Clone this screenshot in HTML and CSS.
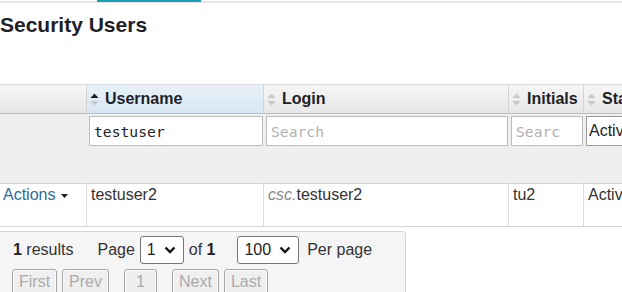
FILE: index.html
```html
<!DOCTYPE html>
<html lang="en">
<head>
<meta charset="utf-8">
<title>Security Users</title>
<link rel="stylesheet" href="styles.css">
</head>
<body>
<div class="topnav"><span class="tab-indicator"></span></div>
<h1 class="page-title">Security Users</h1>

<div class="grid">
  <div class="hcell"></div>
  <div class="hcell sorted">
    <svg class="sort-icon" viewBox="0 0 9 13"><path d="M0.5 5L4.5 0.5L8.5 5Z" fill="#1e1e1e"/><path d="M0.5 8L4.5 12.5L8.5 8Z" fill="#c4c7ca"/></svg>Username
  </div>
  <div class="hcell">
    <svg class="sort-icon" viewBox="0 0 9 13"><path d="M0.5 5L4.5 0.5L8.5 5Z" fill="#c8c8c8"/><path d="M0.5 8L4.5 12.5L8.5 8Z" fill="#c8c8c8"/></svg>Login
  </div>
  <div class="hcell">
    <svg class="sort-icon" viewBox="0 0 9 13"><path d="M0.5 5L4.5 0.5L8.5 5Z" fill="#c8c8c8"/><path d="M0.5 8L4.5 12.5L8.5 8Z" fill="#c8c8c8"/></svg>Initials
  </div>
  <div class="hcell">
    <svg class="sort-icon" viewBox="0 0 9 13"><path d="M0.5 5L4.5 0.5L8.5 5Z" fill="#c8c8c8"/><path d="M0.5 8L4.5 12.5L8.5 8Z" fill="#c8c8c8"/></svg>Status
  </div>

  <div class="fcell"></div>
  <div class="fcell"><input class="filter" type="text" value="testuser"></div>
  <div class="fcell"><input class="filter" type="text" placeholder="Search"></div>
  <div class="fcell"><input class="filter narrow" type="text" placeholder="Search"></div>
  <div class="fcell"><div class="status-select">Active</div></div>

  <div class="dcell actions">Actions<svg class="caret" width="7" height="4" viewBox="0 0 7 4"><path d="M0 0H7L3.5 4Z" fill="#1e1e1e"/></svg></div>
  <div class="dcell">testuser2</div>
  <div class="dcell"><span class="prefix">csc.</span>testuser2</div>
  <div class="dcell">tu2</div>
  <div class="dcell">Active</div>
</div>

<div class="pager">
  <div class="pager-info">
    <span class="count"><b>1</b> results</span>
    <span class="label">Page</span>
    <span class="select"><span>1</span><svg class="chev" width="12" height="8" viewBox="0 0 12 8"><path d="M1.5 1.5L6 6L10.5 1.5" fill="none" stroke="#111" stroke-width="2.4"/></svg></span>
    <span class="of">of <b>1</b></span>
    <span class="select"><span>100</span><svg class="chev" width="12" height="8" viewBox="0 0 12 8"><path d="M1.5 1.5L6 6L10.5 1.5" fill="none" stroke="#111" stroke-width="2.4"/></svg></span>
    <span class="per">Per page</span>
  </div>
  <div class="pager-buttons">
    <div class="btn-group">
      <span class="pbtn">First</span>
      <span class="pbtn">Prev</span>
    </div>
    <span class="pbtn num">1</span>
    <div class="btn-group">
      <span class="pbtn">Next</span>
      <span class="pbtn">Last</span>
    </div>
  </div>
</div>
</body>
</html>
```

FILE: styles.css
```css
* { box-sizing: border-box; }
html, body { margin: 0; padding: 0; overflow: hidden; background: #fff; }
body {
  font-family: "Liberation Sans", Arial, sans-serif;
  font-size: 16px;
  color: #333;
  width: 622px;
  height: 292px;
}

.topnav { display: flex; height: 3px; border-bottom: 2px solid #e6e6e6; }
.tab-indicator { flex: none; margin-left: 97px; width: 104px; height: 2px; background: #1a9db3; }

.page-title {
  margin: 10px 0 47px;
  font-size: 21px;
  line-height: 24px;
  font-weight: bold;
  color: #1f1f27;
}

.grid {
  display: grid;
  grid-template-columns: 87px 177px 245px 75px 120px;
  width: 704px;
}

.hcell {
  height: 30px;
  display: flex;
  align-items: center;
  padding-left: 3px;
  border-top: 1px solid #dadada;
  border-bottom: 1px solid #bdbdbd;
  border-right: 1px solid #d4d4d4;
  background: linear-gradient(#f6f6f6, #e7e7e7);
  font-weight: bold;
  color: #1f1f27;
  white-space: nowrap;
  overflow: hidden;
}
.hcell.sorted { background: linear-gradient(#e7f1f9, #d8e7f3); }
.sort-icon { flex: none; width: 9px; height: 13px; margin-right: 6px; }

.fcell { background: #efefef; padding: 2px 1px 37px 2px; }
.filter {
  display: block;
  width: 100%;
  height: 30px;
  margin: 0;
  padding: 0 4px;
  border: 1px solid #bcbcbc;
  background: #fff;
  font-family: "DejaVu Sans Mono", monospace;
  font-size: 14.7px;
  color: #222;
  outline: none;
}
.filter.narrow { padding-right: 22px; }
.filter::placeholder { color: #b0b0b0; }
.status-select {
  height: 30px;
  display: flex;
  align-items: center;
  padding-left: 2px;
  border: 1px solid #9a9a9a;
  background: #fff;
  color: #222;
  white-space: nowrap;
  overflow: hidden;
}

.dcell {
  padding: 2px 4px 22px;
  line-height: 18px;
  border-top: 1px solid #d4d4d4;
  border-bottom: 1px solid #d4d4d4;
  border-right: 1px solid #dcdcdc;
  background: #fff;
  white-space: nowrap;
  overflow: hidden;
}
.dcell.actions { color: #2b6ca3; padding-left: 3px; }
.caret { margin-left: 6px; vertical-align: middle; }
.prefix { font-style: italic; color: #8a8a8a; }

.pager {
  margin-top: 4px;
  width: 406px;
  height: 80px;
  padding: 4px 0 0 12px;
  background: #f5f5f5;
  border: 1px solid #d6d6d6;
  border-left: none;
  border-radius: 0 4px 0 0;
}
.pager-info { display: flex; align-items: center; height: 28px; white-space: nowrap; color: #333; }
.pager-info b { color: #1f1f27; }
.count { margin-left: 1px; margin-right: 24px; }
.label { margin-right: 5px; }
.of { margin: 0 22px 0 5px; }
.per { margin-left: 8px; }
.select {
  display: inline-flex;
  align-items: center;
  height: 28px;
  padding: 0 7px 0 6px;
  border: 1px solid #767676;
  border-radius: 3px;
  background: #fff;
  color: #222;
}
.chev { margin-left: 8px; }

.pager-buttons { display: flex; gap: 15px; margin-top: 5px; }
.btn-group { display: flex; gap: 5px; }
.pbtn {
  display: inline-block;
  height: 26px;
  padding: 2px 6px;
  line-height: 20px;
  border: 1px solid #a6a6a6;
  border-radius: 3px;
  background: #efefef;
  box-shadow: inset 0 0 0 1px #fbfbfb;
  color: #ababab;
  text-align: center;
}
.pbtn.num { min-width: 33px; }
```
